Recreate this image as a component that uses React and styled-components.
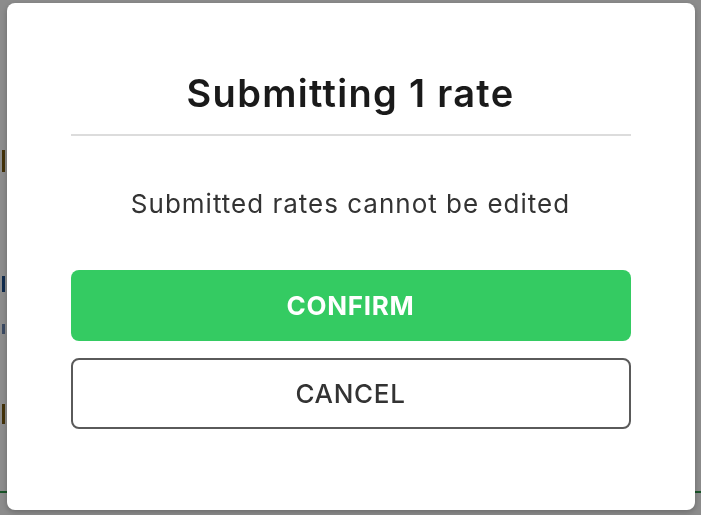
import React from "react";
import styled, { createGlobalStyle } from "styled-components";

const GlobalStyle = createGlobalStyle`
	html, body {
		margin: 0;
		padding: 0;
		background: #fff;
		font-family: Inter, "Noto Sans", sans-serif;
	}
`;

// bits of the page that peek out at the left edge, behind the backdrop
const peeks = [
	{ top: 150, height: 22, color: "#7a5a10" },
	{ top: 276, height: 16, color: "#1b4e8c" },
	{ top: 324, height: 10, color: "#6b87b5" },
	{ top: 404, height: 20, color: "#7a5a10" },
];

const App = () => {
	return (
		<>
			<GlobalStyle />
			<Page>
				{peeks.map((p, i) => (
					<Peek key={i} $top={p.top} $height={p.height} $color={p.color} />
				))}
				<GreenLine />
			</Page>
			<Overlay>
				<Dialog>
					<Title>Submitting 1 rate</Title>
					<Divider />
					<Message>Submitted rates cannot be edited</Message>
					<Actions>
						<Button $variant="primary">CONFIRM</Button>
						<Button>CANCEL</Button>
					</Actions>
				</Dialog>
			</Overlay>
		</>
	);
};

export default App;

const Page = styled.div`
	position: relative;
	height: 515px;
	overflow: hidden;
`;

const Peek = styled.div`
	position: absolute;
	left: 2px;
	top: ${(p) => p.$top}px;
	width: 3px;
	height: ${(p) => p.$height}px;
	background: ${(p) => p.$color};
`;

const GreenLine = styled.div`
	position: absolute;
	left: 0;
	right: 0;
	top: 491px;
	height: 2px;
	background: #2e9a4a;
`;

const Overlay = styled.div`
	position: fixed;
	inset: 0;
	background: rgba(0, 0, 0, 0.45);
	display: flex;
	align-items: flex-start;
	justify-content: center;
	padding-top: 3px;
`;

const Dialog = styled.div`
	width: 688px;
	height: 507px;
	box-sizing: border-box;
	background: #fff;
	border-radius: 8px;
	padding: 0 64px;
	display: flex;
	flex-direction: column;
	box-shadow: 0 2px 6px rgba(0, 0, 0, 0.25);
`;

const Title = styled.h2`
	margin: 68px 0 0;
	text-align: center;
	font-size: 38px;
	font-weight: 600;
	line-height: 44px;
	color: #1a1a1a;
	letter-spacing: 1.3px;
`;

const Divider = styled.hr`
	margin: 19px 0 0;
	border: none;
	border-top: 2px solid #dcdcdc;
`;

const Message = styled.p`
	margin: 52px 0 0;
	text-align: center;
	font-size: 26px;
	line-height: 32px;
	color: #333;
	letter-spacing: 1px;
`;

const Actions = styled.div`
	margin-top: 50px;
	display: flex;
	flex-direction: column;
	gap: 17px;
`;

const Button = styled.button`
	height: 71px;
	border-radius: 8px;
	font-family: inherit;
	font-size: 26px;
	letter-spacing: 0.7px;
	font-weight: ${(p) => (p.$variant === "primary" ? 700 : 500)};
	cursor: pointer;
	background: ${(p) => (p.$variant === "primary" ? "#34cb62" : "#fff")};
	color: ${(p) => (p.$variant === "primary" ? "#fff" : "#333")};
	border: ${(p) =>
		p.$variant === "primary" ? "none" : "2px solid #5a5a5a"};
`;
